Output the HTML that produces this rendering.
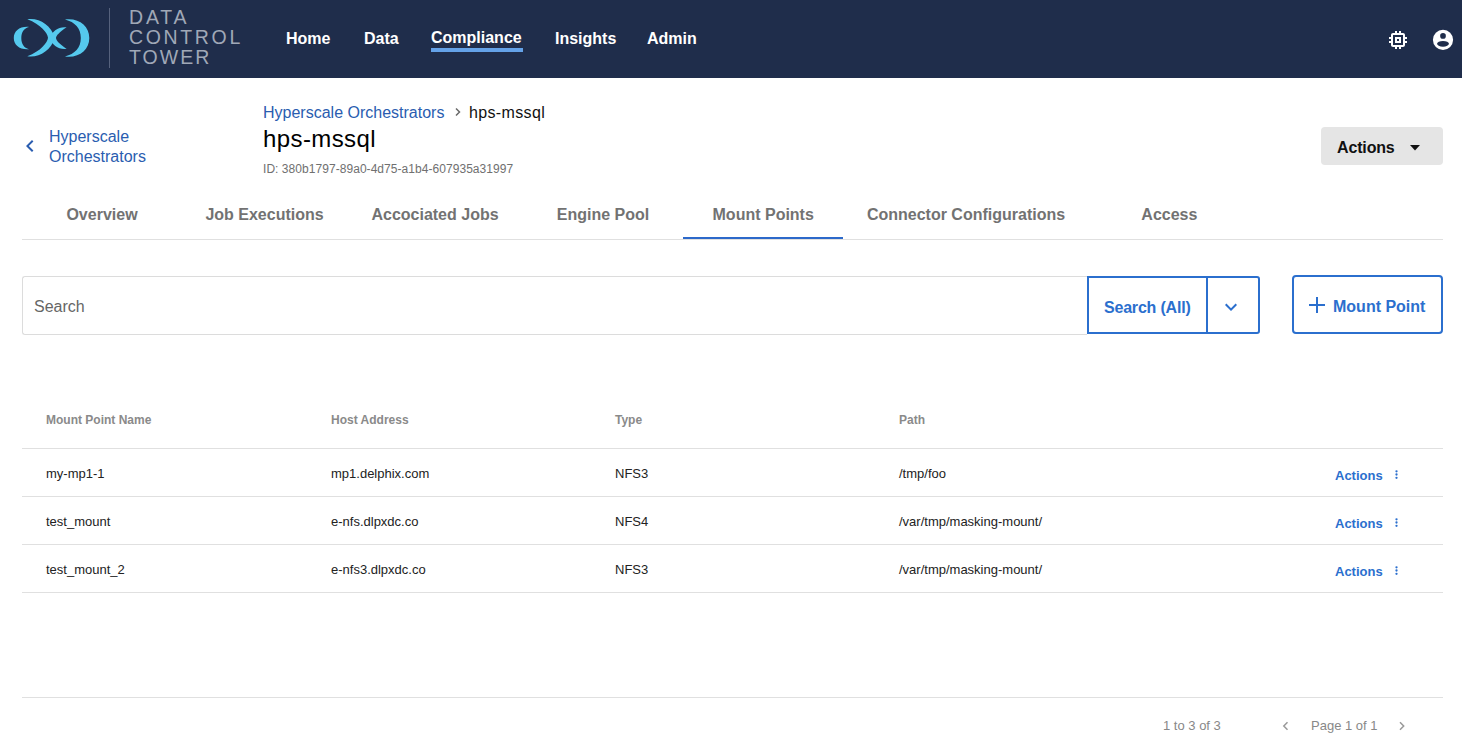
<!DOCTYPE html>
<html><head><meta charset="utf-8">
<style>
*{margin:0;padding:0;box-sizing:border-box}
html,body{width:1462px;height:750px;overflow:hidden;background:#fff;font-family:"Liberation Sans",sans-serif}
.a{position:absolute;white-space:nowrap}
#hdr{position:absolute;left:0;top:0;width:1462px;height:78px;background:#1f2d4b}
.nav{position:absolute;top:1px;font-size:16px;font-weight:bold;color:#fff;line-height:20px}
.tab{position:absolute;top:0;font-size:16px;font-weight:bold;color:#727272;line-height:20px;text-align:center;width:240px}
.hline{position:absolute;height:1px;background:#e0e0e0;left:22px;width:1421px}
.th{position:absolute;font-size:12px;font-weight:bold;color:#8a8a8a;line-height:14px}
.td{position:absolute;font-size:13px;color:#222;line-height:16px}
.act{position:absolute;font-size:13px;font-weight:bold;color:#2b6fce;line-height:16px}
</style></head>
<body>
<div id="hdr">
  <svg class="a" style="left:0;top:0" width="100" height="77" viewBox="0 0 100 77">
    <g fill="#55c9ee">
      <path d="M29,26.9C19.5,26.2 13.8,31 13.8,38.05C13.8,45.1 19.5,49.9 29,49.2C24,47.9 21.3,44.1 21.3,38.05C21.3,32 24,28.2 29,26.9Z"/>
      <path d="M27.3,19.3C39,17.6 50.5,24.5 55,37.8C50.5,51.1 39,58 27.3,56.3C41,51.1 47.5,42.6 48,37.8C47.5,33 41,24.5 27.3,19.3Z"/>
      <path d="M66.6,27.3C59,26.2 52,31 49.5,38.1C52,45.2 59,50 66.6,48.9C59,43.7 56.3,40.7 56,38.1C56.3,35.5 59,32.5 66.6,27.3Z"/>
      <path d="M65,19.4C79,17.6 89.3,26 89.3,37.9C89.3,49.8 79,58.2 65,56.4C75,53.8 80.8,47.8 80.8,37.9C80.8,28 75,22 65,19.4Z"/>
    </g>
  </svg>
  <div class="a" style="left:109px;top:8px;width:1px;height:60px;background:#56627d"></div>
  <div class="nav" style="left:286px;top:29px">Home</div>
  <div class="nav" style="left:364px;top:29px">Data</div>
  <div class="nav" style="left:431px;top:28px">Compliance</div>
  <div class="a" style="left:431px;top:48px;width:92px;height:4px;background:#64a2e8"></div>
  <div class="nav" style="left:555px;top:29px">Insights</div>
  <div class="nav" style="left:647px;top:29px">Admin</div>
  <div class="a" style="left:129px;top:7px;font-size:19.5px;line-height:20px;color:#a0a8b7;letter-spacing:2px"><span style="letter-spacing:2.8px">DATA</span><br><span style="letter-spacing:2.65px">CONTROL</span><br>TOWER</div>
  <svg class="a" style="left:1386px;top:28px" width="24" height="24" viewBox="0 0 24 24"><path fill="#fff" d="M15 9H9v6h6V9zm-2 4h-2v-2h2v2zm8-2V9h-2V7c0-1.1-.9-2-2-2h-2V3h-2v2h-2V3H9v2H7c-1.1 0-2 .9-2 2v2H3v2h2v2H3v2h2v2c0 1.1.9 2 2 2h2v2h2v-2h2v2h2v-2h2c1.1 0 2-.9 2-2v-2h2v-2h-2v-2h2zm-4 6H7V7h10v10z"/></svg>
  <svg class="a" style="left:1431px;top:28px" width="24" height="24" viewBox="0 0 24 24"><circle cx="12" cy="11.8" r="10.1" fill="#fff"/><circle cx="12" cy="7.9" r="2.85" fill="#1f2d4b"/><ellipse cx="12" cy="15.8" rx="5.95" ry="2.9" fill="#1f2d4b"/></svg>
</div>

<!-- back link -->
<div class="a" style="left:49px;top:127px;font-size:16px;line-height:20px;color:#2a5db0">Hyperscale<br>Orchestrators</div>

<!-- breadcrumb -->
<div class="a" style="left:263px;top:103px;font-size:16px;line-height:20px;color:#2a5db0">Hyperscale Orchestrators</div>
<div class="a" style="left:469px;top:103px;font-size:16px;line-height:20px;color:#111;letter-spacing:0.35px">hps-mssql</div>
<div class="a" style="left:263px;top:125px;font-size:24px;line-height:28px;color:#000;letter-spacing:0.4px">hps-mssql</div>
<div class="a" style="left:263px;top:161px;font-size:12px;line-height:16px;color:#707070;letter-spacing:0.05px">ID: 380b1797-89a0-4d75-a1b4-607935a31997</div>

<!-- actions button -->
<div class="a" style="left:1321px;top:127px;width:122px;height:38px;background:#e5e5e5;border-radius:4px"></div>
<div class="a" style="left:1337px;top:138px;font-size:16px;font-weight:bold;line-height:20px;color:#111;letter-spacing:-0.15px">Actions</div>

<!-- tabs -->
<div class="tab" style="left:-18px;top:205px">Overview</div>
<div class="tab" style="left:144.5px;top:205px">Job Executions</div>
<div class="tab" style="left:315px;top:205px">Accociated Jobs</div>
<div class="tab" style="left:483px;top:205px">Engine Pool</div>
<div class="tab" style="left:643.2px;top:205px">Mount Points</div>
<div class="tab" style="left:846px;top:205px">Connector Configurations</div>
<div class="tab" style="left:1049.4px;top:205px">Access</div>
<div class="hline" style="top:239px"></div>
<div class="a" style="left:683px;top:237px;width:160px;height:2px;background:#2c69ca"></div>

<!-- search -->
<div class="a" style="left:22px;top:276px;width:1065px;height:59px;border:1px solid #dcdcdc;border-right:none;border-radius:3px 0 0 3px"></div>
<div class="a" style="left:34px;top:297px;font-size:16px;line-height:20px;color:#666">Search</div>
<div class="a" style="left:1087px;top:276px;width:172.5px;height:58px;border:2px solid #2b6fce;border-radius:0 3px 3px 0;background:#fff"></div>
<div class="a" style="left:1206px;top:276px;width:2px;height:58px;background:#2b6fce"></div>
<div class="a" style="left:1104px;top:298px;font-size:16px;font-weight:bold;line-height:20px;color:#2b6fce;letter-spacing:-0.2px">Search (All)</div>
<div class="a" style="left:1292px;top:275px;width:151px;height:59px;border:2px solid #2b6fce;border-radius:4px"></div>
<div class="a" style="left:1333px;top:297px;font-size:16px;font-weight:bold;line-height:20px;color:#2b6fce">Mount Point</div>

<!-- table -->
<div class="th" style="left:46px;top:413px">Mount Point Name</div>
<div class="th" style="left:331px;top:413px">Host Address</div>
<div class="th" style="left:615px;top:413px">Type</div>
<div class="th" style="left:899px;top:413px">Path</div>
<div class="hline" style="top:448px"></div>
<div class="hline" style="top:496px"></div>
<div class="hline" style="top:544px"></div>
<div class="hline" style="top:592px"></div>

<div class="td" style="left:46px;top:466px">my-mp1-1</div>
<div class="td" style="left:331px;top:466px">mp1.delphix.com</div>
<div class="td" style="left:615px;top:466px">NFS3</div>
<div class="td" style="left:899px;top:466px">/tmp/foo</div>
<div class="act" style="left:1335px;top:468px">Actions</div>

<div class="td" style="left:46px;top:514px">test_mount</div>
<div class="td" style="left:331px;top:514px">e-nfs.dlpxdc.co</div>
<div class="td" style="left:615px;top:514px">NFS4</div>
<div class="td" style="left:899px;top:514px">/var/tmp/masking-mount/</div>
<div class="act" style="left:1335px;top:516px">Actions</div>

<div class="td" style="left:46px;top:562px">test_mount_2</div>
<div class="td" style="left:331px;top:562px">e-nfs3.dlpxdc.co</div>
<div class="td" style="left:615px;top:562px">NFS3</div>
<div class="td" style="left:899px;top:562px">/var/tmp/masking-mount/</div>
<div class="act" style="left:1335px;top:564px">Actions</div>

<!-- footer -->
<div class="hline" style="top:697px"></div>
<div class="a" style="left:1163px;top:718px;font-size:13px;line-height:16px;color:#888">1 to 3 of 3</div>
<div class="a" style="left:1311px;top:718px;font-size:13px;line-height:16px;color:#888">Page 1 of 1</div>

<!-- icons -->
<svg class="a" style="left:18px;top:134px" width="24" height="24" viewBox="0 0 24 24"><path fill="#2a5db0" d="M15.41 7.41L14 6l-6 6 6 6 1.41-1.41L10.83 12z"/></svg>
<svg class="a" style="left:448px;top:102px" width="20" height="20" viewBox="448 102 20 20"><polyline points="456,108.5 459.5,112 456,115.5" fill="none" stroke="#6a6a6a" stroke-width="1.5"/></svg>
<svg class="a" style="left:1400px;top:135px" width="30" height="20" viewBox="1400 135 30 20"><polygon points="1410,145 1420,145 1415,150.5" fill="#111"/></svg>
<svg class="a" style="left:1219px;top:295px" width="24" height="24" viewBox="0 0 24 24"><path fill="#2b6fce" d="M16.59 8.59L12 13.17 7.41 8.59 6 10l6 6 6-6z"/></svg>
<div class="a" style="left:1309px;top:304.2px;width:16px;height:1.6px;background:#2b6fce"></div>
<div class="a" style="left:1316.2px;top:297px;width:1.6px;height:16px;background:#2b6fce"></div>
<svg class="a" style="left:1390px;top:465px" width="14" height="130" viewBox="0 0 14 130">
  <g fill="#2b6fce"><circle cx="6.5" cy="6.3" r="1.15"/><circle cx="6.5" cy="9.5" r="1.15"/><circle cx="6.5" cy="12.8" r="1.15"/>
  <circle cx="6.5" cy="54.3" r="1.15"/><circle cx="6.5" cy="57.5" r="1.15"/><circle cx="6.5" cy="60.8" r="1.15"/>
  <circle cx="6.5" cy="102.3" r="1.15"/><circle cx="6.5" cy="105.5" r="1.15"/><circle cx="6.5" cy="108.8" r="1.15"/></g></svg>
<svg class="a" style="left:1276px;top:716px" width="140" height="20" viewBox="1276 716 140 20"><g fill="none" stroke="#999" stroke-width="1.5"><polyline points="1287.5,722.2 1283.8,726 1287.5,729.7"/><polyline points="1400,722.2 1403.7,726 1400,729.7"/></g></svg>
</body></html>
